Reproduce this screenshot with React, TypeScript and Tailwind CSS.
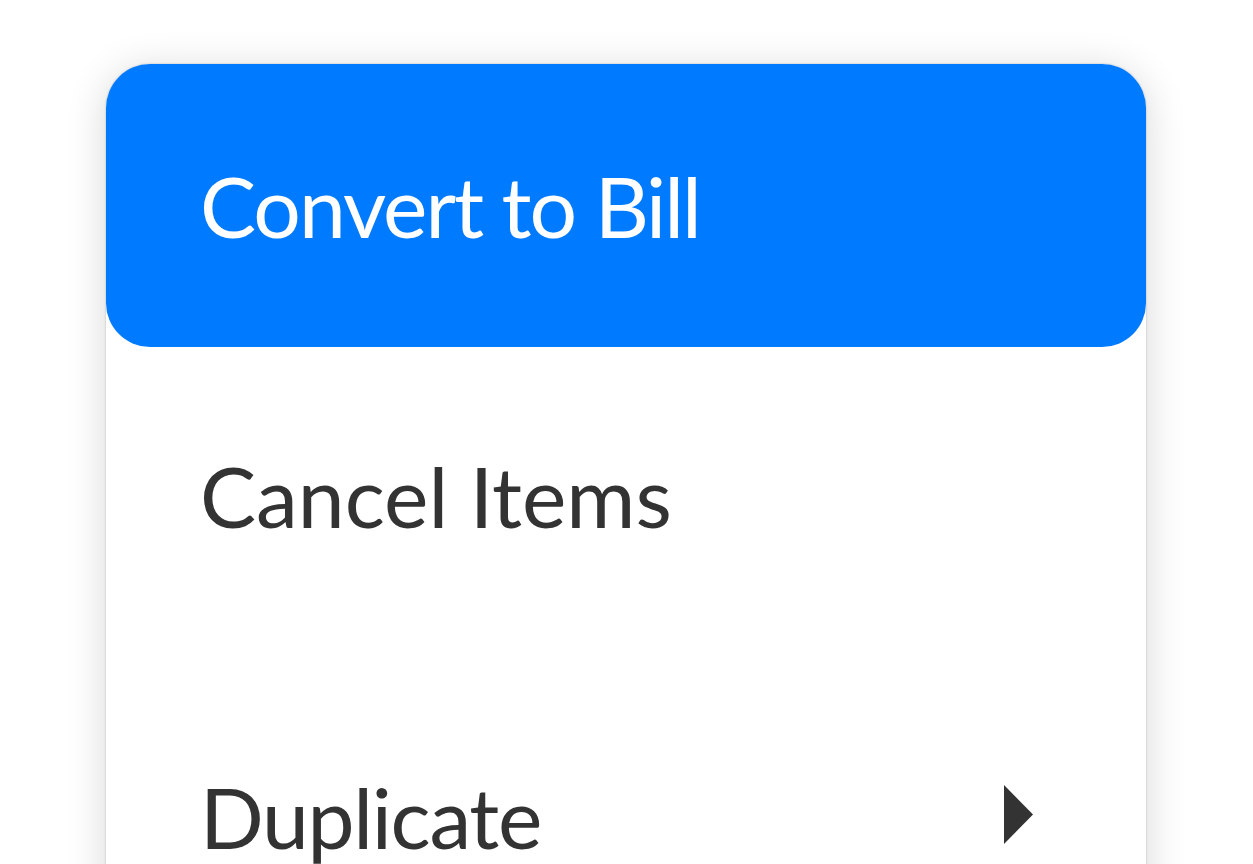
export default function App() {
    const font = { fontFamily: 'Lato, "Open Sans", sans-serif' };
    return (
        <div className="w-full h-[864px] bg-white overflow-hidden pt-16 pl-[106px]" style={font}>
            <div className="w-[1040px] h-[900px] bg-white rounded-t-[44px] shadow-[0_0_2px_rgba(0,0,0,0.25),0_6px_40px_rgba(0,0,0,0.16)]">
                <div className="h-[283px] rounded-[44px] bg-[#007AFF] flex items-center pl-[94px]">
                    <span className="text-[84px] leading-none text-white tracking-[-2px]">Convert to Bill</span>
                </div>
                <div className="h-[298px] flex items-center pl-[94px]">
                    <span className="text-[84px] leading-none text-[#333333]">Cancel Items</span>
                </div>
                <div className="h-[283px] mt-[30px] flex items-center justify-between pl-[94px] pr-[113px]">
                    <span className="text-[84px] leading-none text-[#333333] tracking-[-1.3px]">Duplicate</span>
                    <svg width="29" height="59" viewBox="0 0 29 59" className="mt-[-4px]">
                        <path d="M0 0 L29 29.5 L0 59 Z" fill="#333333" />
                    </svg>
                </div>
            </div>
        </div>
    );
}
